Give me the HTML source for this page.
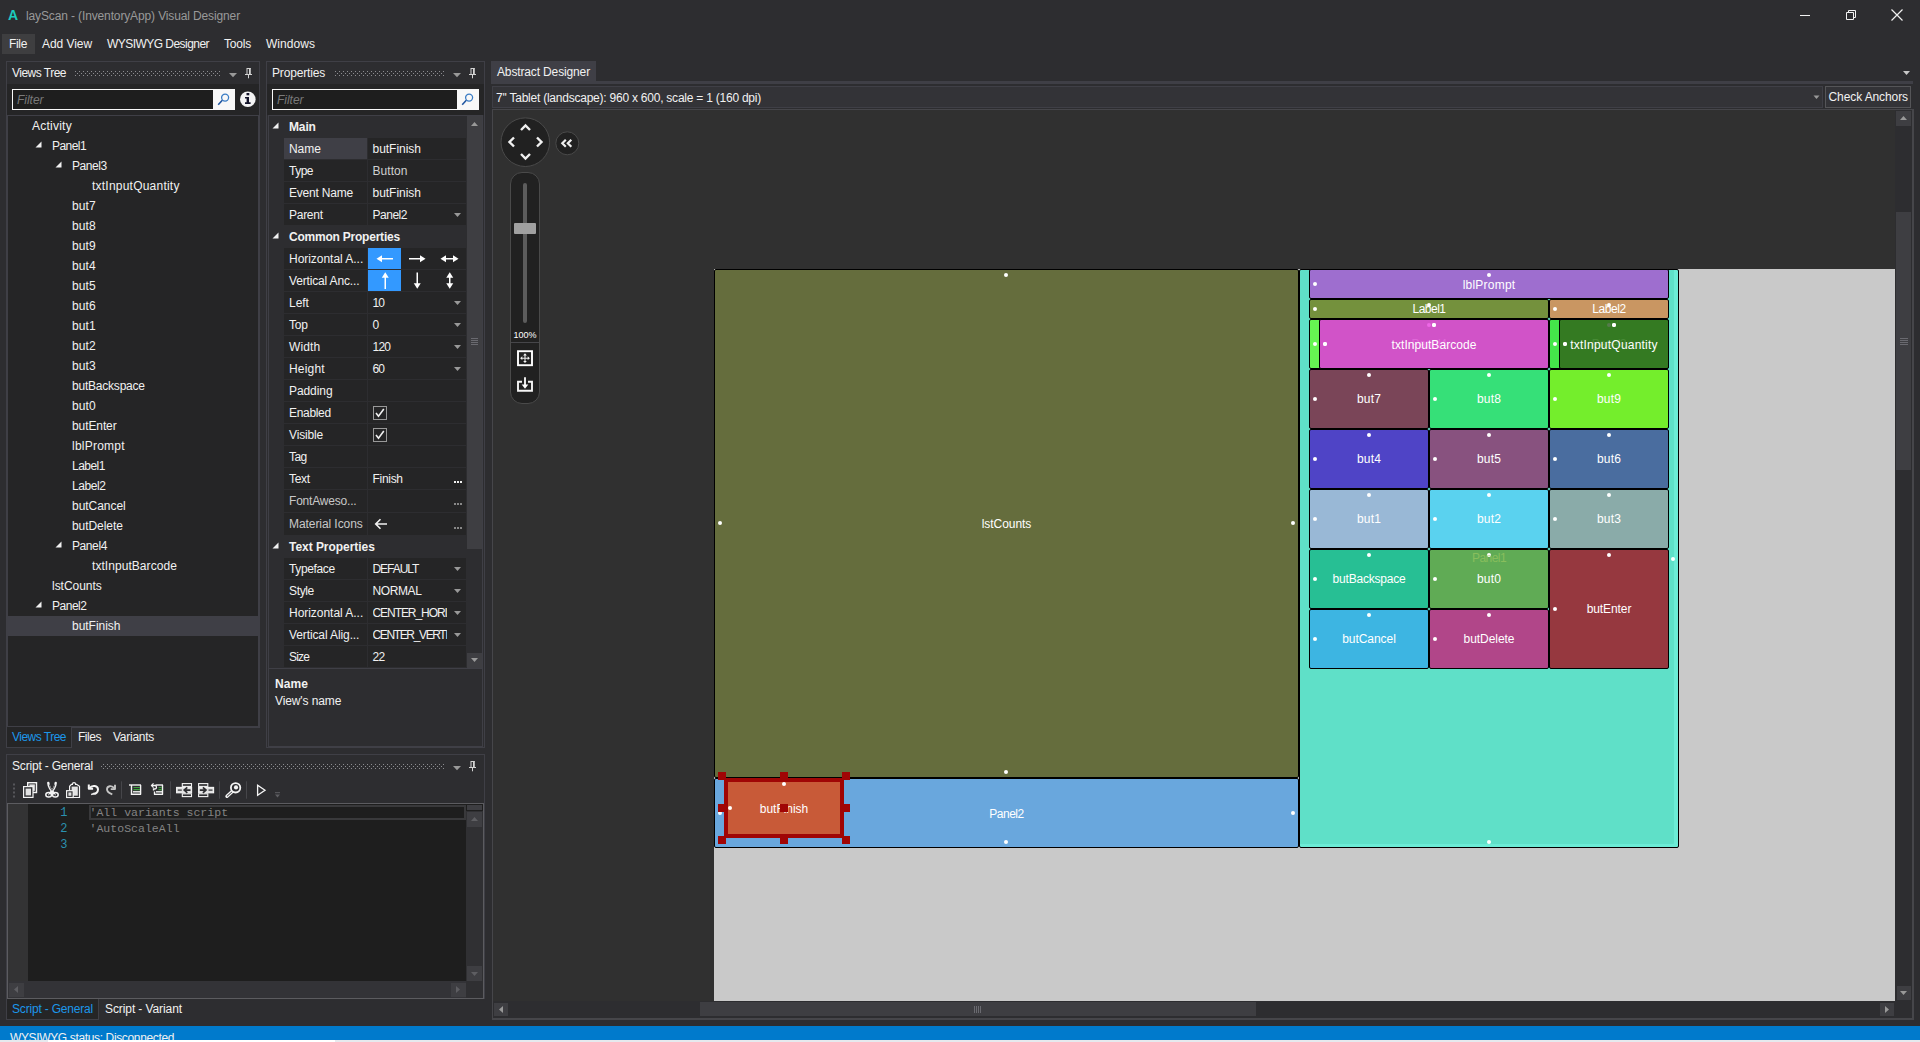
<!DOCTYPE html>
<html lang="en"><head><meta charset="utf-8"><title>layScan - (InventoryApp) Visual Designer</title><style>
*{box-sizing:border-box;margin:0;padding:0}
html,body{width:1920px;height:1042px;overflow:hidden;background:#2d2d30;font-family:"Liberation Sans",sans-serif;font-size:12px;color:#f1f1f1}
body{position:relative}
div,svg,span.a{position:absolute}
.dot{width:4px;height:4px;border-radius:50%;background:#fff}
.v{border:1px solid #000;border-radius:2px;color:#fff;font-size:12px;text-align:center;white-space:pre}
.h{width:8px;height:8px;background:#a00505}
</style></head><body>
<div style="top:5px;height:20px;line-height:20px;white-space:pre;font-size:14px;color:#1ccbbd;font-weight:700;left:8px;">A</div>
<div style="top:6px;height:20px;line-height:20px;white-space:pre;color:#999999;letter-spacing:-0.130px;left:26px;">layScan - (InventoryApp) Visual Designer</div>
<svg style="left:1795px;top:5px;" width="20" height="20" viewBox="0 0 20 20"><path d="M5 10.5H15" stroke="#f1f1f1" stroke-width="1"/></svg>
<svg style="left:1841px;top:5px;" width="20" height="20" viewBox="0 0 20 20"><path d="M5.5 7.5h7v7h-7z M7.5 7.5v-2h7v7h-2" fill="none" stroke="#f1f1f1" stroke-width="1"/></svg>
<svg style="left:1887px;top:5px;" width="20" height="20" viewBox="0 0 20 20"><path d="M4.5 4.5L15.5 15.5M15.5 4.5L4.5 15.5" stroke="#f1f1f1" stroke-width="1.2"/></svg>
<div style="left:2px;top:34px;width:33px;height:20px;background:#3e3e40;"></div>
<div style="top:34px;height:20px;line-height:20px;white-space:pre;letter-spacing:-0.334px;left:9px;">File</div>
<div style="top:34px;height:20px;line-height:20px;white-space:pre;letter-spacing:-0.060px;left:42px;">Add View</div>
<div style="top:34px;height:20px;line-height:20px;white-space:pre;letter-spacing:-0.543px;left:107px;">WYSIWYG Designer</div>
<div style="top:34px;height:20px;line-height:20px;white-space:pre;letter-spacing:-0.202px;left:224px;">Tools</div>
<div style="top:34px;height:20px;line-height:20px;white-space:pre;letter-spacing:0.046px;left:266px;">Windows</div>
<div style="left:6px;top:61px;width:254px;height:667px;border:1px solid #3f3f46;"></div>
<div style="top:63px;height:20px;line-height:20px;white-space:pre;letter-spacing:-0.514px;left:12px;">Views Tree</div>
<svg style="left:75px;top:71px;" width="146" height="5" viewBox="0 0 146 5"><defs><pattern id="g75_73" width="4" height="4" patternUnits="userSpaceOnUse"><rect x="0" y="0" width="1" height="1" fill="#8c8c90"/><rect x="2" y="2" width="1" height="1" fill="#8c8c90"/></pattern></defs><rect width="146" height="5" fill="url(#g75_73)"/></svg>
<svg style="left:229px;top:73px;" width="8" height="5" viewBox="0 0 8 5"><path d="M0 0h8l-4 4.300z" fill="#999"/></svg>
<svg style="left:245px;top:67px;" width="8" height="12" viewBox="0 0 8 12"><path d="M2 1.500h3.500M2 1v6M4.500 1v6" stroke="#d4d4d4" stroke-width="1" fill="none"/><path d="M5 1v6" stroke="#d4d4d4" stroke-width="1.600"/><path d="M0 7.500h7" stroke="#d4d4d4" stroke-width="1"/><path d="M3.500 8v3.300" stroke="#d4d4d4" stroke-width="1"/></svg>
<div style="left:7px;top:84px;width:252px;height:31px;background:#252526;"></div>
<div style="left:12px;top:89px;width:223px;height:21px;background:#f8f8f8;"></div>
<div style="left:13px;top:90px;width:200px;height:19px;background:#1e1e1e;"></div>
<div style="top:89.5px;height:20px;line-height:20px;white-space:pre;color:#7a7a7a;font-style:italic;letter-spacing:-0.028px;left:17px;">Filter</div>
<svg style="left:215px;top:91px;" width="17" height="17" viewBox="0 0 17 17"><circle cx="10.100" cy="6.600" r="3.500" fill="none" stroke="#3a7cc4" stroke-width="1.300"/><path d="M7.300 9.300L3.200 13.700" stroke="#1f55a0" stroke-width="1.600"/></svg>
<svg style="left:239px;top:90px;" width="18" height="19" viewBox="0 0 18 19"><circle cx="8.800" cy="9.300" r="7.800" fill="#f4f4f4"/><path d="M6 7h4v5.200h1.600v1.700H6v-1.700h1.600V8.600H6z" fill="#14142a"/><rect x="7.500" y="3" width="2.800" height="2.300" fill="#14142a"/></svg>
<div style="left:7px;top:115px;width:252px;height:612px;background:#252526;border:1px solid #3f3f46;"></div>
<div style="top:116px;height:20px;line-height:20px;white-space:pre;letter-spacing:0.237px;left:32px;">Activity</div>
<svg style="left:35.4px;top:141px;" width="7" height="7" viewBox="0 0 7 7"><path d="M6.5 0.5v6h-6z" fill="#f1f1f1"/></svg>
<div style="top:136px;height:20px;line-height:20px;white-space:pre;letter-spacing:-0.561px;left:52px;">Panel1</div>
<svg style="left:55.4px;top:161px;" width="7" height="7" viewBox="0 0 7 7"><path d="M6.5 0.5v6h-6z" fill="#f1f1f1"/></svg>
<div style="top:156px;height:20px;line-height:20px;white-space:pre;letter-spacing:-0.444px;left:72px;">Panel3</div>
<div style="top:176px;height:20px;line-height:20px;white-space:pre;letter-spacing:0.222px;left:92px;">txtInputQuantity</div>
<div style="top:196px;height:20px;line-height:20px;white-space:pre;letter-spacing:0.136px;left:72px;">but7</div>
<div style="top:216px;height:20px;line-height:20px;white-space:pre;letter-spacing:0.136px;left:72px;">but8</div>
<div style="top:236px;height:20px;line-height:20px;white-space:pre;letter-spacing:0.136px;left:72px;">but9</div>
<div style="top:256px;height:20px;line-height:20px;white-space:pre;letter-spacing:0.136px;left:72px;">but4</div>
<div style="top:276px;height:20px;line-height:20px;white-space:pre;letter-spacing:0.136px;left:72px;">but5</div>
<div style="top:296px;height:20px;line-height:20px;white-space:pre;letter-spacing:0.136px;left:72px;">but6</div>
<div style="top:316px;height:20px;line-height:20px;white-space:pre;letter-spacing:0.136px;left:72px;">but1</div>
<div style="top:336px;height:20px;line-height:20px;white-space:pre;letter-spacing:0.136px;left:72px;">but2</div>
<div style="top:356px;height:20px;line-height:20px;white-space:pre;letter-spacing:0.136px;left:72px;">but3</div>
<div style="top:376px;height:20px;line-height:20px;white-space:pre;letter-spacing:-0.215px;left:72px;">butBackspace</div>
<div style="top:396px;height:20px;line-height:20px;white-space:pre;letter-spacing:0.136px;left:72px;">but0</div>
<div style="top:416px;height:20px;line-height:20px;white-space:pre;letter-spacing:-0.096px;left:72px;">butEnter</div>
<div style="top:436px;height:20px;line-height:20px;white-space:pre;letter-spacing:0.224px;left:72px;">lblPrompt</div>
<div style="top:456px;height:20px;line-height:20px;white-space:pre;letter-spacing:-0.522px;left:72px;">Label1</div>
<div style="top:476px;height:20px;line-height:20px;white-space:pre;letter-spacing:-0.405px;left:72px;">Label2</div>
<div style="top:496px;height:20px;line-height:20px;white-space:pre;letter-spacing:-0.037px;left:72px;">butCancel</div>
<div style="top:516px;height:20px;line-height:20px;white-space:pre;letter-spacing:-0.063px;left:72px;">butDelete</div>
<svg style="left:55.4px;top:541px;" width="7" height="7" viewBox="0 0 7 7"><path d="M6.5 0.5v6h-6z" fill="#f1f1f1"/></svg>
<div style="top:536px;height:20px;line-height:20px;white-space:pre;letter-spacing:-0.411px;left:72px;">Panel4</div>
<div style="top:556px;height:20px;line-height:20px;white-space:pre;letter-spacing:0.056px;left:92px;">txtInputBarcode</div>
<div style="top:576px;height:20px;line-height:20px;white-space:pre;letter-spacing:-0.036px;left:52px;">lstCounts</div>
<svg style="left:35.4px;top:601px;" width="7" height="7" viewBox="0 0 7 7"><path d="M6.5 0.5v6h-6z" fill="#f1f1f1"/></svg>
<div style="top:596px;height:20px;line-height:20px;white-space:pre;letter-spacing:-0.477px;left:52px;">Panel2</div>
<div style="left:8px;top:616px;width:251px;height:20px;background:#3f3f46;"></div>
<div style="top:616px;height:20px;line-height:20px;white-space:pre;letter-spacing:-0.032px;left:72px;">butFinish</div>
<div style="left:6px;top:727px;width:66px;height:21px;background:#252526;border:1px solid #3f3f46;border-top:none;"></div>
<div style="top:727px;height:20px;line-height:20px;white-space:pre;color:#1c97ea;letter-spacing:-0.514px;left:12px;">Views Tree</div>
<div style="top:727px;height:20px;line-height:20px;white-space:pre;letter-spacing:-0.467px;left:78px;">Files</div>
<div style="top:727px;height:20px;line-height:20px;white-space:pre;letter-spacing:-0.266px;left:113px;">Variants</div>
<div style="left:266px;top:61px;width:219px;height:687px;border:1px solid #3f3f46;"></div>
<div style="top:63px;height:20px;line-height:20px;white-space:pre;letter-spacing:-0.169px;left:272px;">Properties</div>
<svg style="left:334px;top:71px;" width="111" height="5" viewBox="0 0 111 5"><defs><pattern id="g334_73" width="4" height="4" patternUnits="userSpaceOnUse"><rect x="1" y="0" width="1" height="1" fill="#8c8c90"/><rect x="3" y="2" width="1" height="1" fill="#8c8c90"/></pattern></defs><rect width="111" height="5" fill="url(#g334_73)"/></svg>
<svg style="left:453px;top:73px;" width="8" height="5" viewBox="0 0 8 5"><path d="M0 0h8l-4 4.300z" fill="#999"/></svg>
<svg style="left:469px;top:67px;" width="8" height="12" viewBox="0 0 8 12"><path d="M2 1.500h3.500M2 1v6M4.500 1v6" stroke="#d4d4d4" stroke-width="1" fill="none"/><path d="M5 1v6" stroke="#d4d4d4" stroke-width="1.600"/><path d="M0 7.500h7" stroke="#d4d4d4" stroke-width="1"/><path d="M3.500 8v3.300" stroke="#d4d4d4" stroke-width="1"/></svg>
<div style="left:267px;top:84px;width:217px;height:31px;background:#252526;"></div>
<div style="left:272px;top:89px;width:207px;height:21px;background:#f8f8f8;"></div>
<div style="left:273px;top:90px;width:184px;height:19px;background:#1e1e1e;"></div>
<div style="top:89.5px;height:20px;line-height:20px;white-space:pre;color:#7a7a7a;font-style:italic;letter-spacing:-0.028px;left:277px;">Filter</div>
<svg style="left:459px;top:91px;" width="17" height="17" viewBox="0 0 17 17"><circle cx="10.100" cy="6.600" r="3.500" fill="none" stroke="#3a7cc4" stroke-width="1.300"/><path d="M7.300 9.300L3.200 13.700" stroke="#1f55a0" stroke-width="1.600"/></svg>
<div style="left:268px;top:115px;width:215px;height:632px;border:1px solid #3f3f46;"></div>
<svg style="left:272px;top:122px;" width="7" height="7" viewBox="0 0 7 7"><path d="M6.5 0.5v6h-6z" fill="#f1f1f1"/></svg>
<div style="top:116.5px;height:20px;line-height:20px;white-space:pre;font-weight:700;letter-spacing:-0.134px;left:289px;">Main</div>
<div style="left:284px;top:138px;width:83px;height:21px;background:#3f3f46;"></div>
<div style="left:368px;top:138px;width:98px;height:21px;background:#252526;"></div>
<div style="top:138.5px;height:20px;line-height:20px;white-space:pre;letter-spacing:-0.052px;left:289px;">Name</div>
<div style="top:138.5px;height:20px;line-height:20px;white-space:pre;letter-spacing:-0.032px;left:372.5px;">butFinish</div>
<div style="left:284px;top:160px;width:83px;height:21px;background:#252526;"></div>
<div style="left:368px;top:160px;width:98px;height:21px;background:#252526;"></div>
<div style="top:160.5px;height:20px;line-height:20px;white-space:pre;letter-spacing:-0.504px;left:289px;">Type</div>
<div style="top:160.5px;height:20px;line-height:20px;white-space:pre;color:#d0d0d0;letter-spacing:0.051px;left:372.5px;">Button</div>
<div style="left:284px;top:182px;width:83px;height:21px;background:#252526;"></div>
<div style="left:368px;top:182px;width:98px;height:21px;background:#252526;"></div>
<div style="top:182.5px;height:20px;line-height:20px;white-space:pre;letter-spacing:-0.213px;left:289px;">Event Name</div>
<div style="top:182.5px;height:20px;line-height:20px;white-space:pre;letter-spacing:-0.032px;left:372.5px;">butFinish</div>
<div style="left:284px;top:204px;width:83px;height:21px;background:#252526;"></div>
<div style="left:368px;top:204px;width:98px;height:21px;background:#252526;"></div>
<div style="top:204.5px;height:20px;line-height:20px;white-space:pre;letter-spacing:-0.276px;left:289px;">Parent</div>
<div style="top:204.5px;height:20px;line-height:20px;white-space:pre;letter-spacing:-0.477px;left:372.5px;">Panel2</div>
<svg style="left:454px;top:213px;" width="7" height="4" viewBox="0 0 7 4"><path d="M0 0h7l-3.500 4z" fill="#999"/></svg>
<svg style="left:272px;top:232px;" width="7" height="7" viewBox="0 0 7 7"><path d="M6.5 0.5v6h-6z" fill="#f1f1f1"/></svg>
<div style="top:226.5px;height:20px;line-height:20px;white-space:pre;font-weight:700;letter-spacing:-0.223px;left:289px;">Common Properties</div>
<div style="left:284px;top:248px;width:83px;height:21px;background:#252526;"></div>
<div style="left:368px;top:248px;width:98px;height:21px;background:#252526;"></div>
<div style="top:248.5px;height:20px;line-height:20px;white-space:pre;letter-spacing:-0.033px;left:289px;">Horizontal A...</div>
<div style="left:368px;top:248px;width:33px;height:21px;background:#3399ff;"></div>
<svg style="left:368px;top:248px;" width="98" height="21" viewBox="0 0 98 21"><g stroke="#fff" stroke-width="1.5" fill="#fff"><path d="M25 10.75H12" /><path d="M41 10.75h13"/><path d="M76 10.75h11"/><g stroke="none"><path d="M8.5 10.75l5.500-3.500v7z"/><path d="M57.500 10.75l-5.500-3.500v7z"/><path d="M72.500 10.75l5.500-3.500v7z"/><path d="M90.500 10.75l-5.500-3.500v7z"/></g></g></svg>
<div style="left:284px;top:270px;width:83px;height:21px;background:#252526;"></div>
<div style="left:368px;top:270px;width:98px;height:21px;background:#252526;"></div>
<div style="top:270.5px;height:20px;line-height:20px;white-space:pre;letter-spacing:-0.160px;left:289px;">Vertical Anc...</div>
<div style="left:368px;top:270px;width:33px;height:21px;background:#3399ff;"></div>
<svg style="left:368px;top:270px;" width="98" height="21" viewBox="0 0 98 21"><g stroke="#fff" stroke-width="1.5" fill="#fff"><path d="M17.250 19V6" /><path d="M49.250 2.500v13"/><path d="M81.750 5v11"/><g stroke="none"><path d="M17.250 2.300l-3.500 5.500h7z"/><path d="M49.250 18.800l-3.500-5.500h7z"/><path d="M81.750 2.300l-3.500 5.500h7z"/><path d="M81.750 18.800l-3.500-5.500h7z"/></g></g></svg>
<div style="left:284px;top:292px;width:83px;height:21px;background:#252526;"></div>
<div style="left:368px;top:292px;width:98px;height:21px;background:#252526;"></div>
<div style="top:292.5px;height:20px;line-height:20px;white-space:pre;letter-spacing:-0.029px;left:289px;">Left</div>
<div style="top:292.5px;height:20px;line-height:20px;white-space:pre;letter-spacing:-0.873px;left:372.5px;">10</div>
<svg style="left:454px;top:301px;" width="7" height="4" viewBox="0 0 7 4"><path d="M0 0h7l-3.500 4z" fill="#999"/></svg>
<div style="left:284px;top:314px;width:83px;height:21px;background:#252526;"></div>
<div style="left:368px;top:314px;width:98px;height:21px;background:#252526;"></div>
<div style="top:314.5px;height:20px;line-height:20px;white-space:pre;letter-spacing:-0.182px;left:289px;">Top</div>
<div style="top:314.5px;height:20px;line-height:20px;white-space:pre;letter-spacing:-1.173px;left:372.5px;">0</div>
<svg style="left:454px;top:323px;" width="7" height="4" viewBox="0 0 7 4"><path d="M0 0h7l-3.500 4z" fill="#999"/></svg>
<div style="left:284px;top:336px;width:83px;height:21px;background:#252526;"></div>
<div style="left:368px;top:336px;width:98px;height:21px;background:#252526;"></div>
<div style="top:336.5px;height:20px;line-height:20px;white-space:pre;letter-spacing:0.145px;left:289px;">Width</div>
<div style="top:336.5px;height:20px;line-height:20px;white-space:pre;letter-spacing:-0.740px;left:372.5px;">120</div>
<svg style="left:454px;top:345px;" width="7" height="4" viewBox="0 0 7 4"><path d="M0 0h7l-3.500 4z" fill="#999"/></svg>
<div style="left:284px;top:358px;width:83px;height:21px;background:#252526;"></div>
<div style="left:368px;top:358px;width:98px;height:21px;background:#252526;"></div>
<div style="top:358.5px;height:20px;line-height:20px;white-space:pre;letter-spacing:0.186px;left:289px;">Height</div>
<div style="top:358.5px;height:20px;line-height:20px;white-space:pre;letter-spacing:-0.873px;left:372.5px;">60</div>
<svg style="left:454px;top:367px;" width="7" height="4" viewBox="0 0 7 4"><path d="M0 0h7l-3.500 4z" fill="#999"/></svg>
<div style="left:284px;top:380px;width:83px;height:21px;background:#252526;"></div>
<div style="left:368px;top:380px;width:98px;height:21px;background:#252526;"></div>
<div style="top:380.5px;height:20px;line-height:20px;white-space:pre;letter-spacing:-0.077px;left:289px;">Padding</div>
<div style="left:284px;top:402px;width:83px;height:21px;background:#252526;"></div>
<div style="left:368px;top:402px;width:98px;height:21px;background:#252526;"></div>
<div style="top:402.5px;height:20px;line-height:20px;white-space:pre;letter-spacing:-0.320px;left:289px;">Enabled</div>
<svg style="left:373px;top:406px;" width="14" height="14" viewBox="0 0 14 14"><rect x="0.5" y="0.5" width="13" height="13" fill="#252526" stroke="#999" stroke-width="1"/><path d="M3 7l2.5 3.2L10.8 3" fill="none" stroke="#f1f1f1" stroke-width="1.6"/></svg>
<div style="left:284px;top:424px;width:83px;height:21px;background:#252526;"></div>
<div style="left:368px;top:424px;width:98px;height:21px;background:#252526;"></div>
<div style="top:424.5px;height:20px;line-height:20px;white-space:pre;letter-spacing:-0.162px;left:289px;">Visible</div>
<svg style="left:373px;top:428px;" width="14" height="14" viewBox="0 0 14 14"><rect x="0.5" y="0.5" width="13" height="13" fill="#252526" stroke="#999" stroke-width="1"/><path d="M3 7l2.5 3.2L10.8 3" fill="none" stroke="#f1f1f1" stroke-width="1.6"/></svg>
<div style="left:284px;top:446px;width:83px;height:21px;background:#252526;"></div>
<div style="left:368px;top:446px;width:98px;height:21px;background:#252526;"></div>
<div style="top:446.5px;height:20px;line-height:20px;white-space:pre;letter-spacing:-0.582px;left:289px;">Tag</div>
<div style="left:284px;top:468px;width:83px;height:21px;background:#252526;"></div>
<div style="left:368px;top:468px;width:98px;height:21px;background:#252526;"></div>
<div style="top:468.5px;height:20px;line-height:20px;white-space:pre;letter-spacing:-0.327px;left:289px;">Text</div>
<div style="top:468.5px;height:20px;line-height:20px;white-space:pre;letter-spacing:-0.301px;left:372.5px;">Finish</div>
<svg style="left:453.5px;top:481px;" width="9" height="3" viewBox="0 0 9 3"><rect x="0" y="0" width="2" height="2" fill="#f1f1f1"/><rect x="3" y="0" width="2" height="2" fill="#f1f1f1"/><rect x="6" y="0" width="2" height="2" fill="#f1f1f1"/></svg>
<div style="left:284px;top:490px;width:83px;height:22px;background:#252526;"></div>
<div style="left:368px;top:490px;width:98px;height:22px;background:#252526;"></div>
<div style="top:491px;height:20px;line-height:20px;white-space:pre;color:#c8c8c8;letter-spacing:-0.201px;left:289px;">FontAweso...</div>
<svg style="left:453.5px;top:503px;" width="9" height="3" viewBox="0 0 9 3"><rect x="0" y="0" width="2" height="2" fill="#888"/><rect x="3" y="0" width="2" height="2" fill="#888"/><rect x="6" y="0" width="2" height="2" fill="#888"/></svg>
<div style="left:284px;top:513px;width:83px;height:22px;background:#252526;"></div>
<div style="left:368px;top:513px;width:98px;height:22px;background:#252526;"></div>
<div style="top:514px;height:20px;line-height:20px;white-space:pre;color:#c8c8c8;letter-spacing:-0.071px;left:289px;">Material Icons</div>
<svg style="left:453.5px;top:527px;" width="9" height="3" viewBox="0 0 9 3"><rect x="0" y="0" width="2" height="2" fill="#888"/><rect x="3" y="0" width="2" height="2" fill="#888"/><rect x="6" y="0" width="2" height="2" fill="#888"/></svg>
<svg style="left:374px;top:518px;" width="14" height="12" viewBox="0 0 14 12"><path d="M13 6H2M6.5 1.2L1.7 6l4.8 4.8" fill="none" stroke="#f1f1f1" stroke-width="1.6"/></svg>
<svg style="left:272px;top:542px;" width="7" height="7" viewBox="0 0 7 7"><path d="M6.5 0.5v6h-6z" fill="#f1f1f1"/></svg>
<div style="top:536.5px;height:20px;line-height:20px;white-space:pre;font-weight:700;letter-spacing:-0.045px;left:289px;">Text Properties</div>
<div style="left:284px;top:558px;width:83px;height:21px;background:#252526;"></div>
<div style="left:368px;top:558px;width:98px;height:21px;background:#252526;"></div>
<div style="top:558.5px;height:20px;line-height:20px;white-space:pre;letter-spacing:-0.362px;left:289px;">Typeface</div>
<div style="top:558.5px;height:20px;line-height:20px;white-space:pre;letter-spacing:-1.046px;left:372.5px;">DEFAULT</div>
<svg style="left:454px;top:567px;" width="7" height="4" viewBox="0 0 7 4"><path d="M0 0h7l-3.500 4z" fill="#999"/></svg>
<div style="left:284px;top:580px;width:83px;height:21px;background:#252526;"></div>
<div style="left:368px;top:580px;width:98px;height:21px;background:#252526;"></div>
<div style="top:580.5px;height:20px;line-height:20px;white-space:pre;letter-spacing:-0.356px;left:289px;">Style</div>
<div style="top:580.5px;height:20px;line-height:20px;white-space:pre;letter-spacing:-0.407px;left:372.5px;">NORMAL</div>
<svg style="left:454px;top:589px;" width="7" height="4" viewBox="0 0 7 4"><path d="M0 0h7l-3.500 4z" fill="#999"/></svg>
<div style="left:284px;top:602px;width:83px;height:21px;background:#252526;"></div>
<div style="left:368px;top:602px;width:98px;height:21px;background:#252526;"></div>
<div style="top:602.5px;height:20px;line-height:20px;white-space:pre;letter-spacing:-0.033px;left:289px;">Horizontal A...</div>
<div style="top:602.5px;height:20px;line-height:20px;white-space:pre;letter-spacing:-1.064px;left:372.5px;width:74.5px;overflow:hidden;">CENTER_HORI</div>
<svg style="left:454px;top:611px;" width="7" height="4" viewBox="0 0 7 4"><path d="M0 0h7l-3.500 4z" fill="#999"/></svg>
<div style="left:284px;top:624px;width:83px;height:21px;background:#252526;"></div>
<div style="left:368px;top:624px;width:98px;height:21px;background:#252526;"></div>
<div style="top:624.5px;height:20px;line-height:20px;white-space:pre;letter-spacing:-0.108px;left:289px;">Vertical Alig...</div>
<div style="top:624.5px;height:20px;line-height:20px;white-space:pre;letter-spacing:-1.361px;left:372.5px;width:74.5px;overflow:hidden;">CENTER_VERTI</div>
<svg style="left:454px;top:633px;" width="7" height="4" viewBox="0 0 7 4"><path d="M0 0h7l-3.500 4z" fill="#999"/></svg>
<div style="left:284px;top:646px;width:83px;height:21px;background:#252526;"></div>
<div style="left:368px;top:646px;width:98px;height:21px;background:#252526;"></div>
<div style="top:646.5px;height:20px;line-height:20px;white-space:pre;letter-spacing:-0.811px;left:289px;">Size</div>
<div style="top:646.5px;height:20px;line-height:20px;white-space:pre;letter-spacing:-0.723px;left:372.5px;">22</div>
<div style="left:467px;top:116px;width:15px;height:552px;background:#2d2d30;"></div>
<div style="left:467px;top:116px;width:15px;height:17px;background:#3e3e42;"></div>
<svg style="left:471px;top:122px;" width="7" height="4" viewBox="0 0 7 4"><path d="M0 4h7l-3.500-4z" fill="#999"/></svg>
<div style="left:467px;top:133px;width:15px;height:416px;background:#3e3e42;"></div>
<svg style="left:470px;top:337px;" width="10" height="10" viewBox="0 0 10 10"><path d="M1 1.500h7M1 3.500h7M1 5.500h7M1 7.500h7" stroke="#6a6a70" stroke-width="1"/></svg>
<div style="left:467px;top:653px;width:15px;height:15px;background:#3e3e42;"></div>
<svg style="left:471px;top:658px;" width="7" height="4" viewBox="0 0 7 4"><path d="M0 0h7l-3.500 4z" fill="#999"/></svg>
<div style="left:269px;top:668px;width:213px;height:1px;background:#3f3f46;"></div>
<div style="top:673.5px;height:20px;line-height:20px;white-space:pre;font-weight:700;letter-spacing:0.104px;left:275px;">Name</div>
<div style="top:691px;height:20px;line-height:20px;white-space:pre;letter-spacing:-0.108px;left:275px;">View's name</div>
<div style="left:6px;top:754px;width:479px;height:245px;border:1px solid #3f3f46;"></div>
<div style="top:756px;height:20px;line-height:20px;white-space:pre;letter-spacing:-0.189px;left:12px;">Script - General</div>
<svg style="left:101px;top:764px;" width="344" height="5" viewBox="0 0 344 5"><defs><pattern id="g101_766" width="4" height="4" patternUnits="userSpaceOnUse"><rect x="2" y="0" width="1" height="1" fill="#8c8c90"/><rect x="0" y="2" width="1" height="1" fill="#8c8c90"/></pattern></defs><rect width="344" height="5" fill="url(#g101_766)"/></svg>
<svg style="left:453px;top:766px;" width="8" height="5" viewBox="0 0 8 5"><path d="M0 0h8l-4 4.300z" fill="#999"/></svg>
<svg style="left:469px;top:760px;" width="8" height="12" viewBox="0 0 8 12"><path d="M2 1.500h3.500M2 1v6M4.500 1v6" stroke="#d4d4d4" stroke-width="1" fill="none"/><path d="M5 1v6" stroke="#d4d4d4" stroke-width="1.600"/><path d="M0 7.500h7" stroke="#d4d4d4" stroke-width="1"/><path d="M3.500 8v3.300" stroke="#d4d4d4" stroke-width="1"/></svg>
<svg style="left:0;top:776px" width="300" height="28" viewBox="0 776 300 28"><rect x="13" y="783.5" width="2" height="2" fill="#56565a"/><rect x="13" y="787.5" width="2" height="2" fill="#56565a"/><rect x="13" y="791.5" width="2" height="2" fill="#56565a"/><rect x="13" y="795.5" width="2" height="2" fill="#56565a"/><rect x="27.6" y="782.6" width="9" height="10" fill="#e2e2e2" stroke="#f4f4f4" stroke-width="1.2"/><rect x="28.9" y="783.9" width="6.4" height="7.4" fill="none" stroke="#2d2d30" stroke-width="0.9"/><rect x="23.600" y="786.600" width="9.400" height="10.800" fill="#2d2d30" stroke="#f4f4f4" stroke-width="1.2"/><rect x="25.600" y="788.600" width="5.400" height="6.800" fill="#e2e2e2"/><g fill="none" stroke="#f4f4f4" stroke-linecap="round"><path d="M48.300 783c0.300 4 2.300 7 5.800 10.300" stroke-width="2.400"/><path d="M55.700 783c-0.300 4-2.300 7-5.800 10.300" stroke-width="2.400"/><ellipse cx="48.700" cy="794.800" rx="2.900" ry="2.300" stroke-width="1.500"/><ellipse cx="55.300" cy="794.800" rx="2.900" ry="2.300" stroke-width="1.500"/></g><path d="M49.300 784.500c0.500 2.500 1.400 4.300 2.700 5.800M54.700 784.500c-0.500 2.500-1.400 4.300-2.700 5.800" stroke="#2d2d30" stroke-width="0.800" fill="none"/><rect x="48.200" y="794.300" width="1" height="1" fill="#f4f4f4"/><rect x="54.800" y="794.300" width="1" height="1" fill="#f4f4f4"/><path d="M69.600 797.500V786.300l1.800-2h1a1.600 1.600 0 0 1 3.200 0h1l2.900 2v11.200z" fill="#2d2d30" stroke="#f4f4f4" stroke-width="1.200"/><rect x="71.600" y="786.600" width="6.200" height="9.100" fill="#e2e2e2"/><rect x="66.600" y="790.700" width="6.600" height="6.800" fill="#2d2d30" stroke="#f4f4f4" stroke-width="1.200"/><rect x="68.400" y="792.400" width="3" height="3.400" fill="#e2e2e2"/><g fill="none" stroke="#f4f4f4" stroke-width="2" stroke-linejoin="round"><path d="M88.800 784.500v4.300h4.300"/><path d="M89.500 788.300c2.500-3.800 8.500-2.800 8.500 1.200 0 3-2.500 4.600-5 4.300"/></g><path d="M93 793.800l-1.800 0.800" stroke="#f4f4f4" stroke-width="1.500"/><g fill="none" stroke="#c4c4c4" stroke-width="1.900" stroke-linejoin="round"><path d="M115 784.800v4.300h-4.300"/><path d="M114.300 788.500c-2.500-3.800-7.300-2.500-7.300 0.800 0 2.300 2.200 4 5.300 5"/></g><path d="M121.5 781.300v17.400" stroke="#46464a" stroke-width="1"/><path d="M170.5 781.300v17.400" stroke="#46464a" stroke-width="1"/><path d="M219.5 781.300v17.400" stroke="#46464a" stroke-width="1"/><path d="M246.5 781.300v17.400" stroke="#46464a" stroke-width="1"/><g fill="none" stroke="#f4f4f4" stroke-width="1.400"><path d="M129 785h12"/><path d="M131.500 785v9.300h9.500"/><path d="M140.600 785v9.500"/><path d="M133 791.800h7"/></g><path d="M133.500 787.500h6.500M133.500 789.600h6.500" stroke="#3fa03f" stroke-width="1.100"/><g fill="none" stroke="#f4f4f4" stroke-width="1.400"><path d="M155.500 785h7.500"/><path d="M162.500 785v9.500"/><path d="M154 794.300h9"/><path d="M154.500 791.500v3"/><path d="M156 791.800h6"/><path d="M151.500 785.500h3.500c2 0 2 3.500 0 3.500h-1.500v1.500" stroke-width="1.300"/><path d="M153.500 783.300l-2 2.200 2 2.200" stroke-width="1.200"/></g><path d="M158.500 787.500h3.500M158.500 789.600h3.500" stroke="#3fa03f" stroke-width="1.100"/><g fill="#2d2d30" stroke="#f4f4f4" stroke-width="1.100"><rect x="182.3" y="783.600" width="9.200" height="2.800"/><rect x="182.3" y="793.800" width="9.200" height="2.800"/><rect x="176.6" y="787.400" width="15" height="5.400" fill="#e2e2e2"/></g><path d="M190.5 790.100h-6M187.3 787.300l-3.100 2.800 3.100 2.800" fill="none" stroke="#2d2d30" stroke-width="1.700"/><path d="M177.8 790.100h4" stroke="#2d2d30" stroke-width="1.200"/><g fill="#2d2d30" stroke="#f4f4f4" stroke-width="1.100"><rect x="198.6" y="783.600" width="9.200" height="2.800"/><rect x="198.6" y="793.800" width="9.200" height="2.800"/><rect x="198.6" y="787.400" width="15" height="5.400" fill="#e2e2e2"/></g><path d="M199.8 790.100h6M202.9 787.300l3.100 2.800-3.100 2.800" fill="none" stroke="#2d2d30" stroke-width="1.700"/><path d="M208.5 790.100h4" stroke="#2d2d30" stroke-width="1.200"/><path d="M232.200 791.600l-5.200 4.700" stroke="#f4f4f4" stroke-width="3.400" stroke-linecap="round"/><path d="M232.200 791.600l-5.200 4.700" stroke="#2d2d30" stroke-width="1"/><circle cx="235.600" cy="787.800" r="4.700" fill="#2d2d30" stroke="#f4f4f4" stroke-width="1.800"/><circle cx="236" cy="787.400" r="2.100" fill="#f4f4f4"/><path d="M257.600 785.300v10l7.400-5z" fill="#2d2d30" stroke="#f4f4f4" stroke-width="1.300" stroke-linejoin="miter"/><path d="M275 792.700h5" stroke="#5e5e62" stroke-width="1"/><path d="M275 794.500h5l-2.500 3z" fill="#5e5e62"/></svg>
<div style="left:7px;top:803px;width:477px;height:196px;border:1px solid #5c5c60;"></div>
<div style="left:8px;top:804px;width:20px;height:177px;background:#333334;"></div>
<div style="left:28px;top:804px;width:438px;height:177px;background:#1e1e1e;"></div>
<div style="left:89px;top:805px;width:377px;height:15px;border:2px solid #39393b;"></div>
<div style="left:40px;width:27.500px;text-align:right;top:804.5px;height:16px;line-height:16px;color:#2b91af;font-family:'Liberation Mono',monospace;font-size:12px">1</div>
<div style="left:89.500px;top:805.1px;height:16px;line-height:16px;color:#848484;font-family:'Liberation Mono',monospace;font-size:11.550px;white-space:pre">'All variants script</div>
<div style="left:40px;width:27.500px;text-align:right;top:820.5px;height:16px;line-height:16px;color:#2b91af;font-family:'Liberation Mono',monospace;font-size:12px">2</div>
<div style="left:89.500px;top:821.1px;height:16px;line-height:16px;color:#848484;font-family:'Liberation Mono',monospace;font-size:11.550px;white-space:pre">'AutoScaleAll</div>
<div style="left:40px;width:27.500px;text-align:right;top:836.5px;height:16px;line-height:16px;color:#2b91af;font-family:'Liberation Mono',monospace;font-size:12px">3</div>
<div style="left:466px;top:804px;width:17px;height:177px;background:#303033;"></div>
<div style="left:466px;top:804px;width:17px;height:7px;background:#3e3e42;border:1px solid #1e1e1e;"></div>
<div style="left:467px;top:812px;width:15px;height:15px;background:#3e3e42;"></div>
<svg style="left:471px;top:817px;" width="7" height="4" viewBox="0 0 7 4"><path d="M0 4h7l-3.500-4z" fill="#5e5e62"/></svg>
<div style="left:467px;top:966px;width:15px;height:15px;background:#3e3e42;"></div>
<svg style="left:471px;top:972px;" width="7" height="4" viewBox="0 0 7 4"><path d="M0 0h7l-3.500 4z" fill="#5e5e62"/></svg>
<div style="left:8px;top:981px;width:458px;height:17px;background:#333337;"></div>
<div style="left:9px;top:983px;width:15px;height:14px;background:#3e3e42;"></div>
<svg style="left:14px;top:986px;" width="4" height="7" viewBox="0 0 4 7"><path d="M4 0v7l-4-3.500z" fill="#5e5e62"/></svg>
<div style="left:451px;top:983px;width:15px;height:14px;background:#3e3e42;"></div>
<svg style="left:456px;top:986px;" width="4" height="7" viewBox="0 0 4 7"><path d="M0 0v7l4-3.500z" fill="#5e5e62"/></svg>
<div style="left:466px;top:981px;width:17px;height:17px;background:#2f2f32;"></div>
<div style="left:6px;top:999px;width:93px;height:21px;background:#252526;border:1px solid #3f3f46;border-top:none;"></div>
<div style="top:998.7px;height:20px;line-height:20px;white-space:pre;color:#1c97ea;letter-spacing:-0.189px;left:12px;">Script - General</div>
<div style="top:999px;height:20px;line-height:20px;white-space:pre;letter-spacing:-0.092px;left:105px;">Script - Variant</div>
<div style="left:0px;top:1026px;width:1920px;height:14px;background:#007acc;"></div>
<div style="left:0;top:1026px;width:1920px;height:14px;overflow:hidden"><div style="left:10px;top:2px;height:20px;line-height:20px;white-space:pre;letter-spacing:-0.359px">WYSIWYG status: Disconnected</div></div>
<div style="left:0px;top:1040px;width:1920px;height:2px;background:#e6e9ee;"></div>
<div style="left:48px;top:1040px;width:287px;height:2px;background:#ffffff;"></div>
<div style="left:491px;top:61px;width:105px;height:21px;background:#3f3f46;"></div>
<div style="top:61.5px;height:20px;line-height:20px;white-space:pre;letter-spacing:-0.140px;left:497px;">Abstract Designer</div>
<div style="left:491px;top:81px;width:1422px;height:3px;background:#3f3f46;"></div>
<svg style="left:1902.5px;top:71px;" width="7" height="4" viewBox="0 0 7 4"><path d="M0 0h7l-3.500 4z" fill="#c8c8c8"/></svg>
<div style="left:492px;top:86px;width:1331px;height:22px;background:#333337;border:1px solid #3f3f46;"></div>
<div style="top:88px;height:20px;line-height:20px;white-space:pre;letter-spacing:-0.232px;left:496px;">7'' Tablet (landscape): 960 x 600, scale = 1 (160 dpi)</div>
<svg style="left:1813px;top:95px;" width="7" height="5" viewBox="0 0 7 5"><path d="M0.500 0.500h6l-3 3.500z" fill="#999"/></svg>
<div style="left:1825px;top:86px;width:86px;height:22px;background:#333337;border:1px solid #555558;"></div>
<div style="top:87px;height:20px;line-height:20px;white-space:pre;letter-spacing:-0.093px;left:1828.5px;">Check Anchors</div>
<div style="left:492px;top:109px;width:1422px;height:911px;border:1px solid #46464a;border-right-width:2px;border-bottom-width:2px;"></div>
<div style="left:493px;top:110px;width:1402px;height:891px;background:#303030;"></div>
<div style="left:714px;top:269px;width:1181px;height:732px;background:#c9c9c9;"></div>
<div style="left:1895px;top:111px;width:17px;height:890px;background:#2d2d30;"></div>
<div style="left:1896px;top:111px;width:15px;height:15px;background:#3e3e42;"></div>
<svg style="left:1900px;top:116px;" width="7" height="4" viewBox="0 0 7 4"><path d="M0 4h7l-3.500-4z" fill="#999"/></svg>
<div style="left:1896px;top:212px;width:15px;height:258px;background:#3e3e42;"></div>
<svg style="left:1899px;top:337px;" width="10" height="10" viewBox="0 0 10 10"><path d="M1 1.500h8M1 3.500h8M1 5.500h8M1 7.500h8" stroke="#6a6a70" stroke-width="1"/></svg>
<div style="left:1897px;top:986px;width:14px;height:14px;background:#3e3e42;"></div>
<svg style="left:1900px;top:991px;" width="7" height="4" viewBox="0 0 7 4"><path d="M0 0h7l-3.500 4z" fill="#999"/></svg>
<div style="left:493px;top:1001px;width:1419px;height:17px;background:#2d2d30;"></div>
<div style="left:494px;top:1003px;width:14px;height:13px;background:#3e3e42;"></div>
<svg style="left:499px;top:1006px;" width="4" height="7" viewBox="0 0 4 7"><path d="M4 0v7l-4-3.500z" fill="#999"/></svg>
<div style="left:700px;top:1002px;width:556px;height:14px;background:#3e3e42;"></div>
<svg style="left:973px;top:1005px;" width="10" height="9" viewBox="0 0 10 9"><path d="M1.500 1v7M3.500 1v7M5.500 1v7M7.500 1v7" stroke="#6a6a70" stroke-width="1"/></svg>
<div style="left:1880px;top:1003px;width:14px;height:13px;background:#3e3e42;"></div>
<svg style="left:1885px;top:1006px;" width="4" height="7" viewBox="0 0 4 7"><path d="M0 0v7l4-3.500z" fill="#999"/></svg>
<svg style="left:499.5px;top:116.5px;" width="52" height="52" viewBox="0 0 52 52"><circle cx="25.300" cy="25.200" r="24.300" fill="#212121" stroke="#4a4a4a" stroke-width="1"/><g fill="none" stroke="#f1f1f1" stroke-width="2.400"><path d="M21 13l4.500-4.500 4.500 4.500"/><path d="M21 37l4.500 4.500 4.500-4.500"/><path d="M14 20.500l-4.500 4.500 4.500 4.500"/><path d="M37 20.500l4.500 4.500-4.500 4.500"/></g></svg>
<svg style="left:554px;top:130px;" width="26" height="26" viewBox="0 0 26 26"><circle cx="13.300" cy="13.300" r="11.500" fill="#212121" stroke="#4a4a4a" stroke-width="1"/><g fill="none" stroke="#f1f1f1" stroke-width="2.200" transform="translate(0.3,0.3)"><path d="M11.500 9.500l-3.500 3.500 3.500 3.500"/><path d="M17 9.500l-3.500 3.500 3.500 3.500"/></g></svg>
<div style="left:510px;top:172px;width:30px;height:232px;background:#212121;border:1px solid #4a4a4a;border-radius:12px 12px 12px 12px;"></div>
<div style="left:523px;top:183px;width:4px;height:140px;background:#5c5c5c;border-radius:2px;"></div>
<div style="left:514px;top:223px;width:22px;height:11px;background:#a0a0a0;border-radius:1px;"></div>
<div style="top:328.5px;height:12px;line-height:12px;white-space:pre;font-size:9px;color:#ffffff;left:505px;width:40px;text-align:center;">100%</div>
<div style="left:511px;top:342px;width:28px;height:1px;background:#46464a;"></div>
<svg style="left:516px;top:349px;" width="18" height="18" viewBox="0 0 18 18"><rect x="2" y="2.200" width="14" height="14" fill="none" stroke="#fff" stroke-width="1.900"/><path d="M9 6v6.400M5.800 9.200h6.400" stroke="#e8e8e8" stroke-width="1.100" fill="none"/><path d="M9 4.300l-1.900 2.200h3.800zM9 14.100l-1.900-2.200h3.800zM4.100 9.200l2.200-1.900v3.800zM13.900 9.200l-2.200-1.900v3.800z" fill="#f4f4f4"/></svg>
<svg style="left:516px;top:376px;" width="18" height="18" viewBox="0 0 18 18"><path d="M6 5.800H2v9h14v-9h-4" fill="none" stroke="#f4f4f4" stroke-width="1.900"/><path d="M9 1.200v8" stroke="#fff" stroke-width="1.800"/><path d="M9 12.700l-3.300-4.200h6.600z" fill="#fff"/></svg>
<div class="v" style="left:714px;top:269px;width:585px;height:509px;background:#656d3d;"></div>
<div style="top:513.5px;height:20px;line-height:20px;white-space:pre;color:#fff;letter-spacing:-0.036px;left:906.5px;width:200px;text-align:center;">lstCounts</div>
<div class="dot" style="left:718px;top:521px"></div>
<div class="dot" style="left:1004px;top:273px"></div>
<div class="dot" style="left:1291px;top:521px"></div>
<div class="dot" style="left:1004px;top:770px"></div>
<div class="v" style="left:714px;top:778px;width:585px;height:70px;background:#69a7dd;"></div>
<div style="top:804px;height:20px;line-height:20px;white-space:pre;color:#fff;letter-spacing:-0.477px;left:906.5px;width:200px;text-align:center;">Panel2</div>
<div class="dot" style="left:718px;top:811px"></div>
<div class="dot" style="left:1291px;top:811px"></div>
<div class="dot" style="left:1004px;top:840px"></div>
<div class="v" style="left:1299px;top:269px;width:380px;height:579px;background:#5fe0c8;box-shadow:inset -4px -3px 0 #6cecd6;"></div>
<div class="dot" style="left:1487px;top:840px"></div>
<div class="dot" style="left:1671px;top:557px"></div>
<div class="v" style="left:1309px;top:269px;width:360px;height:30px;background:#9e6ecf;"></div>
<div style="top:275px;height:20px;line-height:20px;white-space:pre;color:#fff;letter-spacing:0.224px;left:1389px;width:200px;text-align:center;">lblPrompt</div>
<div class="dot" style="left:1313px;top:282px"></div>
<div class="dot" style="left:1487px;top:273px"></div>
<div class="v" style="left:1309px;top:299px;width:240px;height:20px;background:#74913d;"></div>
<div style="top:299px;height:20px;line-height:20px;white-space:pre;color:#fff;letter-spacing:-0.522px;left:1329px;width:200px;text-align:center;">Label1</div>
<div class="dot" style="left:1313px;top:307px"></div>
<div class="dot" style="left:1427px;top:303px"></div>
<div class="v" style="left:1549px;top:299px;width:120px;height:20px;background:#c99662;"></div>
<div style="top:299px;height:20px;line-height:20px;white-space:pre;color:#fff;letter-spacing:-0.405px;left:1509px;width:200px;text-align:center;">Label2</div>
<div class="dot" style="left:1553px;top:307px"></div>
<div class="dot" style="left:1607px;top:303px"></div>
<div class="v" style="left:1309px;top:319px;width:240px;height:50px;background:#66f552;"></div>
<div class="dot" style="left:1313px;top:342px"></div>
<div class="dot" style="left:1427px;top:323px"></div>
<div class="v" style="left:1319px;top:319px;width:230px;height:50px;background:#d153c8;"></div>
<div class="dot" style="left:1323px;top:342px"></div>
<div class="dot" style="left:1432px;top:323px"></div>
<div class="dot" style="left:1427px;top:323px;background:#ee68e6"></div>
<div style="top:334px;height:20px;line-height:20px;white-space:pre;color:#ee7ae6;letter-spacing:-0.411px;left:1379px;width:100px;text-align:center;opacity:.55;">Panel4</div>
<div class="v" style="left:1319px;top:319px;width:230px;height:50px;background:transparent;border-color:transparent;"></div>
<div style="top:335px;height:20px;line-height:20px;white-space:pre;color:#fff;letter-spacing:0.056px;left:1334px;width:200px;text-align:center;">txtInputBarcode</div>
<div class="dot" style="left:1323px;top:342px"></div>
<div class="dot" style="left:1432px;top:323px"></div>
<div class="v" style="left:1549px;top:319px;width:120px;height:50px;background:#44e64a;"></div>
<div class="dot" style="left:1553px;top:342px"></div>
<div class="dot" style="left:1607px;top:323px"></div>
<div class="v" style="left:1559px;top:319px;width:110px;height:50px;background:#347a22;"></div>
<div class="dot" style="left:1563px;top:342px"></div>
<div class="dot" style="left:1612px;top:323px"></div>
<div class="dot" style="left:1607px;top:323px;background:#557a4c"></div>
<div style="top:334px;height:20px;line-height:20px;white-space:pre;color:#5a9a48;letter-spacing:-0.444px;left:1559px;width:100px;text-align:center;opacity:.55;">Panel3</div>
<div class="v" style="left:1559px;top:319px;width:110px;height:50px;background:transparent;border-color:transparent;"></div>
<div style="top:335px;height:20px;line-height:20px;white-space:pre;color:#fff;letter-spacing:0.222px;left:1514px;width:200px;text-align:center;">txtInputQuantity</div>
<div class="dot" style="left:1563px;top:342px"></div>
<div class="dot" style="left:1612px;top:323px"></div>
<div class="v" style="left:1309px;top:369px;width:120px;height:60px;background:#7a4558;"></div>
<div style="top:389px;height:20px;line-height:20px;white-space:pre;color:#fff;letter-spacing:0.136px;left:1269px;width:200px;text-align:center;">but7</div>
<div class="dot" style="left:1313px;top:397px"></div>
<div class="dot" style="left:1367px;top:373px"></div>
<div class="v" style="left:1429px;top:369px;width:120px;height:60px;background:#36e078;"></div>
<div style="top:389px;height:20px;line-height:20px;white-space:pre;color:#fff;letter-spacing:0.136px;left:1389px;width:200px;text-align:center;">but8</div>
<div class="dot" style="left:1433px;top:397px"></div>
<div class="dot" style="left:1487px;top:373px"></div>
<div class="v" style="left:1549px;top:369px;width:120px;height:60px;background:#74ee2c;"></div>
<div style="top:389px;height:20px;line-height:20px;white-space:pre;color:#fff;letter-spacing:0.136px;left:1509px;width:200px;text-align:center;">but9</div>
<div class="dot" style="left:1553px;top:397px"></div>
<div class="dot" style="left:1607px;top:373px"></div>
<div class="v" style="left:1309px;top:429px;width:120px;height:60px;background:#4f44c6;"></div>
<div style="top:449px;height:20px;line-height:20px;white-space:pre;color:#fff;letter-spacing:0.136px;left:1269px;width:200px;text-align:center;">but4</div>
<div class="dot" style="left:1313px;top:457px"></div>
<div class="dot" style="left:1367px;top:433px"></div>
<div class="v" style="left:1429px;top:429px;width:120px;height:60px;background:#88527f;"></div>
<div style="top:449px;height:20px;line-height:20px;white-space:pre;color:#fff;letter-spacing:0.136px;left:1389px;width:200px;text-align:center;">but5</div>
<div class="dot" style="left:1433px;top:457px"></div>
<div class="dot" style="left:1487px;top:433px"></div>
<div class="v" style="left:1549px;top:429px;width:120px;height:60px;background:#4a6d9f;"></div>
<div style="top:449px;height:20px;line-height:20px;white-space:pre;color:#fff;letter-spacing:0.136px;left:1509px;width:200px;text-align:center;">but6</div>
<div class="dot" style="left:1553px;top:457px"></div>
<div class="dot" style="left:1607px;top:433px"></div>
<div class="v" style="left:1309px;top:489px;width:120px;height:60px;background:#99b8d6;"></div>
<div style="top:509px;height:20px;line-height:20px;white-space:pre;color:#fff;letter-spacing:0.136px;left:1269px;width:200px;text-align:center;">but1</div>
<div class="dot" style="left:1313px;top:517px"></div>
<div class="dot" style="left:1367px;top:493px"></div>
<div class="v" style="left:1429px;top:489px;width:120px;height:60px;background:#5ad2ef;"></div>
<div style="top:509px;height:20px;line-height:20px;white-space:pre;color:#fff;letter-spacing:0.136px;left:1389px;width:200px;text-align:center;">but2</div>
<div class="dot" style="left:1433px;top:517px"></div>
<div class="dot" style="left:1487px;top:493px"></div>
<div class="v" style="left:1549px;top:489px;width:120px;height:60px;background:#8aaba9;"></div>
<div style="top:509px;height:20px;line-height:20px;white-space:pre;color:#fff;letter-spacing:0.136px;left:1509px;width:200px;text-align:center;">but3</div>
<div class="dot" style="left:1553px;top:517px"></div>
<div class="dot" style="left:1607px;top:493px"></div>
<div class="v" style="left:1309px;top:549px;width:120px;height:60px;background:#27bf94;"></div>
<div style="top:569px;height:20px;line-height:20px;white-space:pre;color:#fff;letter-spacing:-0.215px;left:1269px;width:200px;text-align:center;">butBackspace</div>
<div class="dot" style="left:1313px;top:577px"></div>
<div class="dot" style="left:1367px;top:553px"></div>
<div class="v" style="left:1429px;top:549px;width:120px;height:60px;background:#60ab55;"></div>
<div style="top:569px;height:20px;line-height:20px;white-space:pre;color:#fff;letter-spacing:0.136px;left:1389px;width:200px;text-align:center;">but0</div>
<div class="dot" style="left:1433px;top:577px"></div>
<div class="dot" style="left:1487px;top:553px"></div>
<div class="v" style="left:1309px;top:609px;width:120px;height:60px;background:#3db5e2;"></div>
<div style="top:629px;height:20px;line-height:20px;white-space:pre;color:#fff;letter-spacing:-0.037px;left:1269px;width:200px;text-align:center;">butCancel</div>
<div class="dot" style="left:1313px;top:637px"></div>
<div class="dot" style="left:1367px;top:613px"></div>
<div class="v" style="left:1429px;top:609px;width:120px;height:60px;background:#b14689;"></div>
<div style="top:629px;height:20px;line-height:20px;white-space:pre;color:#fff;letter-spacing:-0.063px;left:1389px;width:200px;text-align:center;">butDelete</div>
<div class="dot" style="left:1433px;top:637px"></div>
<div class="dot" style="left:1487px;top:613px"></div>
<div class="v" style="left:1549px;top:549px;width:120px;height:120px;background:#96383f;"></div>
<div style="top:599px;height:20px;line-height:20px;white-space:pre;color:#fff;letter-spacing:-0.096px;left:1509px;width:200px;text-align:center;">butEnter</div>
<div class="dot" style="left:1553px;top:607px"></div>
<div class="dot" style="left:1607px;top:553px"></div>
<div style="top:548px;height:20px;line-height:20px;white-space:pre;color:#a4cc62;letter-spacing:-0.561px;left:1439px;width:100px;text-align:center;opacity:.6;">Panel1</div>
<div style="left:724px;top:778px;width:120px;height:60px;background:#c85a38;border:4px solid #a00505;"></div>
<div style="top:798.5px;height:20px;line-height:20px;white-space:pre;color:#fff;letter-spacing:-0.032px;left:724px;width:120px;text-align:center;">butFinish</div>
<div class="dot" style="left:782px;top:782px"></div><div class="dot" style="left:728px;top:806px"></div>
<div class="h" style="left:718px;top:772px"></div>
<div class="h" style="left:780px;top:772px"></div>
<div class="h" style="left:842px;top:772px"></div>
<div class="h" style="left:718px;top:804px"></div>
<div class="h" style="left:842px;top:804px"></div>
<div class="h" style="left:718px;top:836px"></div>
<div class="h" style="left:780px;top:836px"></div>
<div class="h" style="left:842px;top:836px"></div>
<div class="h" style="left:780px;top:804px"></div>
</body></html>
